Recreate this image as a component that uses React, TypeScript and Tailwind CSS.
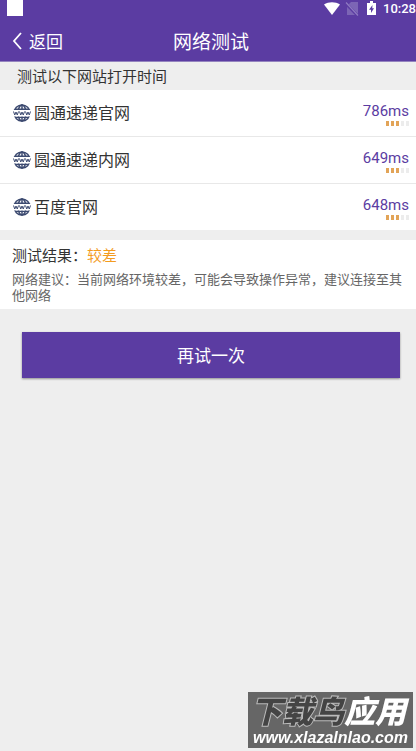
import type { ReactNode } from 'react';

type Site = {
    name: string;
    delay: string;
    level: number;
};

const sites: Site[] = [
    { name: '圆通速递官网', delay: '786ms', level: 3 },
    { name: '圆通速递内网', delay: '649ms', level: 3 },
    { name: '百度官网', delay: '648ms', level: 3 },
];

const StatusBar = () => (
    <div className="flex h-5 items-start justify-between pl-[7px]">
        <span className="h-4 w-4 bg-white" />
        <div className="flex items-center pt-px text-white">
            <svg className="mr-[5px] h-4 w-4" viewBox="0 0 16 16" fill="currentColor">
                <path d="M0 3.600C4.600.400 11.400.400 16 3.600L8 14z" />
            </svg>
            <svg className="mr-2 h-4 w-[14px]" viewBox="0 0 14 16">
                <path d="M6 1h7v13H2V5z" fill="#7c65b5" />
                <path d="M0 1.500L13 15" stroke="#5b3ca2" strokeWidth="3" />
                <path d="M1 1.500L13 14.500" stroke="#8f7bc2" strokeWidth="1.200" />
            </svg>
            <svg className="mr-[7px] h-4 w-[9px]" viewBox="0 0 9 16">
                <path d="M3 0h3v2h3v12H0V2h3z" fill="currentColor" />
                <path d="M5.500 4L2 8.700h2V12l3-4.700H5.200z" fill="#5b3ca2" />
            </svg>
            <span className="font-[Roboto,sans-serif] text-[13px] leading-4 font-medium">10:28</span>
        </div>
    </div>
);

const Header = () => (
    <header className="border-b border-[#9484bf] bg-[#5b3ca2]">
        <StatusBar />
        <div className="grid h-[41px] grid-cols-[1fr_auto_1fr] items-center text-white">
            <button type="button" className="flex items-center gap-[7px] pl-3 text-[17px] leading-6">
                <svg className="h-[18px] w-[10px]" viewBox="0 0 10 18" fill="none" stroke="currentColor" strokeWidth="1.800">
                    <path d="M9 1L2 9l7 8" />
                </svg>
                返回
            </button>
            <h1 className="pl-[6px] text-[19px] leading-6">网络测试</h1>
        </div>
    </header>
);

const GlobeIcon = () => (
    <svg className="h-[18px] w-[18px] shrink-0" viewBox="0 0 36 36" fill="none" aria-hidden="true">
        <clipPath id="globe">
            <path d="M0 0h36v12H0zM0 25h36v11H0z" />
        </clipPath>
        <g clipPath="url(#globe)" stroke="#3c4a70" strokeWidth="3">
            <circle cx="18" cy="18" r="16" />
            <ellipse cx="18" cy="18" rx="8" ry="16" />
            <path d="M18 1v34M4 10.500h28M4 26.500h28" />
        </g>
        <path
            d="M1 15l2.500 7L6 16l2.500 6L11 15M13 15l2.500 7 2.500-6 2.500 6L23 15M25 15l2.500 7 2.500-6 2.500 6L35 15"
            stroke="#3c4a70"
            strokeWidth="2"
        />
    </svg>
);

const SignalBars = ({ level }: { level: number }) => (
    <div className="flex gap-[2px]">
        {[0, 1, 2, 3, 4].map((i) => (
            <span key={i} className={i < level ? 'h-[5px] w-[3px] bg-[#e2a458]' : 'h-[5px] w-[3px] bg-[#ececec]'} />
        ))}
    </div>
);

const SiteRow = ({ site }: { site: Site }) => (
    <li className="flex h-[47px] items-center justify-between pr-[7px] pl-[13px] last:h-[46px]">
        <div className="flex items-center gap-[3px] text-base leading-6 text-[#333]">
            <GlobeIcon />
            <span className="pb-[2px]">{site.name}</span>
        </div>
        <div className="flex flex-col items-end">
            <span className="font-[Roboto,sans-serif] text-[15px] leading-5 text-[#5b3ca2]">{site.delay}</span>
            <SignalBars level={site.level} />
        </div>
    </li>
);

const Panel = ({ children }: { children: ReactNode }) => (
    <section className="mt-[10px] bg-white pt-[3px] pr-[6px] pb-[6px] pl-3">{children}</section>
);

const Watermark = () => (
    <div className="fixed right-[3px] bottom-[3px] flex h-14 w-[165px] flex-col items-center justify-end bg-[#666] italic">
        <div className="pr-1 text-[31px] leading-9 font-black whitespace-nowrap">
            <span className="text-[#444] [paint-order:stroke_fill] [-webkit-text-stroke:2px_#bbb]">下载鸟</span>
            <span className="text-white">应用</span>
        </div>
        <div className="font-['Liberation_Sans',sans-serif] text-base leading-5 font-bold text-white">www.xlazalnlao.com</div>
    </div>
);

const App = () => {
    return (
        <div className="min-h-screen bg-[#eee] font-['Noto_Sans_CJK_SC',sans-serif]">
            <Header />
            <main>
                <h2 className="pt-[2px] pb-[2px] pl-[17px] text-[15px] leading-6 text-[#333]">测试以下网站打开时间</h2>
                <ul className="divide-y divide-[#e8e8e8] bg-white">
                    {sites.map((site) => (
                        <SiteRow key={site.name} site={site} />
                    ))}
                </ul>
                <Panel>
                    <p className="text-[15px] leading-6 text-[#333]">
                        测试结果：<span className="text-[#f39c1f]">较差</span>
                    </p>
                    <p className="mt-1 text-[13px] leading-4 text-[#666]">
                        网络建议：当前网络环境较差，可能会导致操作异常，建议连接至其他网络
                    </p>
                </Panel>
                <div className="pt-[23px] pr-4 pl-[22px]">
                    <button
                        type="button"
                        className="h-[46px] w-full bg-[#5b3ca2] text-[17px] leading-6 text-white shadow-[0_1px_2px_rgba(0,0,0,0.4)]"
                    >
                        再试一次
                    </button>
                </div>
            </main>
            <Watermark />
        </div>
    );
};

export default App;
